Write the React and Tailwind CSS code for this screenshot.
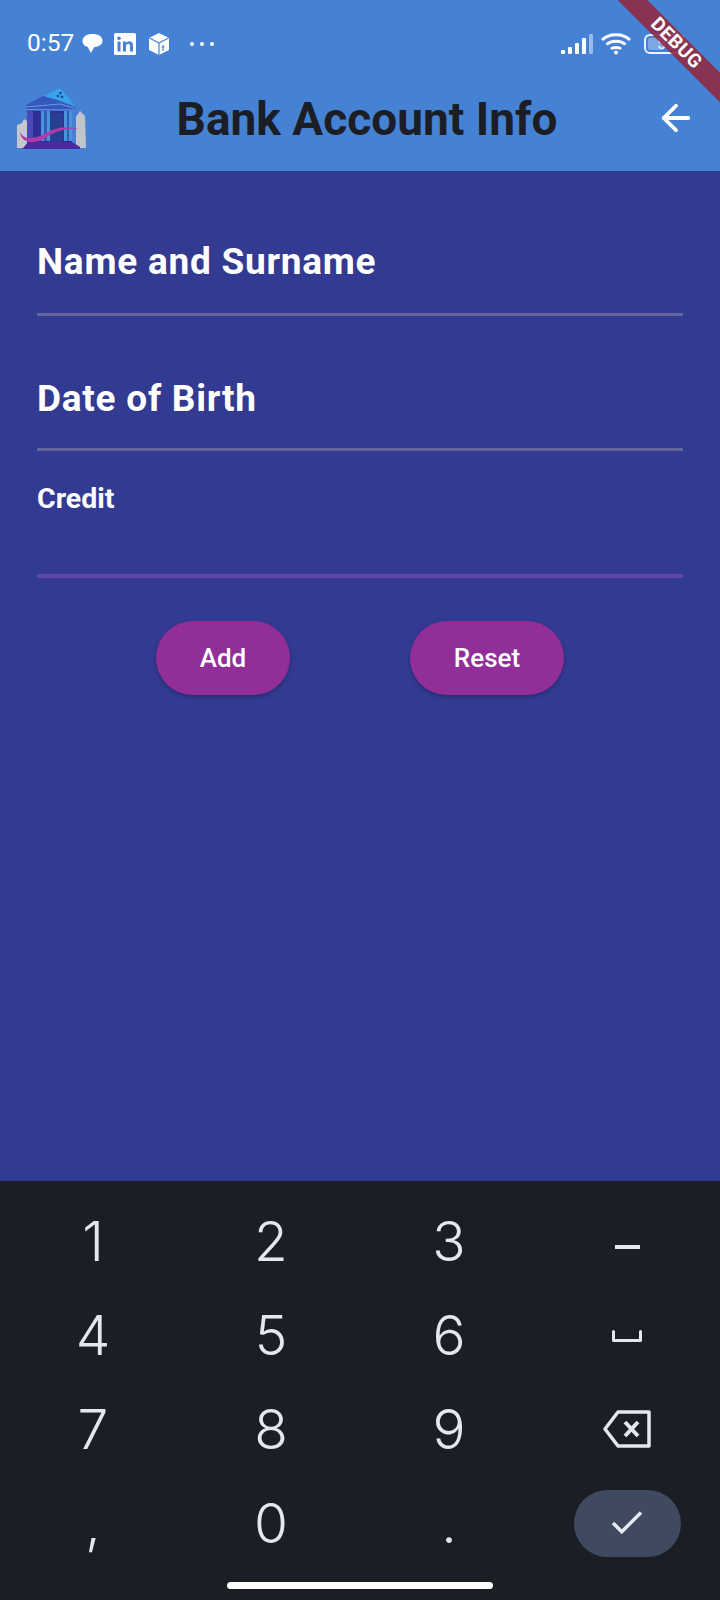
import { ArrowLeft, Check } from "lucide-react";

const keys = ["1", "2", "3", "dash", "4", "5", "6", "space", "7", "8", "9", "back", ",", "0", ".", "ok"];

const Logo = () => (
  <svg width="110" height="90" viewBox="0 0 110 90" className="shrink-0">
    <path d="M17 73 L17 50 L22 48 L24 44 L27 46 L28 73 Z" fill="#c6c8ce" />
    <path d="M76 73 L76 42 L80 36 L85 41 L86 73 Z" fill="#c2c4cc" />
    <path d="M43 21 L60 13 L75 31 L57 25 Z" fill="#35a4ea" />
    <circle cx="60.500" cy="18" r="1.300" fill="#1f3f8f" />
    <circle cx="58" cy="21" r="1.300" fill="#1f3f8f" />
    <circle cx="62" cy="22" r="1.300" fill="#1f3f8f" />
    <path d="M26 30 L43 21 L57 25 L75 32 L74 36 L26 36 Z" fill="#3557c0" />
    <path d="M26 32 L60 29 L74 33 M26 34.500 L74 35" stroke="#79aee6" strokeWidth="0.800" fill="none" />
    <path d="M27 36 L72 36 L72 69 L27 69 Z" fill="#2f2f98" />
    <path d="M27 36 L33 36 L33 69 L27 69 Z" fill="#4b49b8" />
    <path d="M41 36 L50 36 L50 66 L41 66 Z" fill="#4a94dc" />
    <path d="M44 36 L47 36 L47 66 L44 66 Z" fill="#2c5fb8" />
    <path d="M64 36 L72 36 L72 66 L64 66 Z" fill="#4a94dc" />
    <path d="M67 36 L69 36 L69 66 L67 66 Z" fill="#2c5fb8" />
    <path d="M50 38 L63 38 L63 66 L50 66 Z" fill="#27408f" />
    <path d="M24 72 L28 67 L72 67 L80 72 L80 74 L22 74 Z" fill="#4a2a9e" />
    <path d="M20 57 C24 66 36 64 46 58 C56 52 68 51 79 54 C66 53 56 56 47 62 C36 70 21 69 20 57 Z" fill="#b03aa8" />
  </svg>
);

const StatusBar = () => (
  <div className="flex h-[86px] shrink-0 items-center pl-[27px] pt-[1px] text-white">
    <span className="w-[55px] text-[24.500px] leading-none">0:57</span>
    <svg width="21" height="21" viewBox="0 0 20 20" fill="#fff">
      <path d="M10 1C4.500 1 0.500 3.500 0.500 7.500c0 3 2 5 5 5.800L8.500 19l3-5.500c4.500-.5 8-2.600 8-6 0-4-4-6.500-9.500-6.500Z" />
    </svg>
    <svg width="22" height="22" viewBox="0 0 22 22" className="ml-[11px]">
      <rect width="22" height="22" rx="1.500" fill="#fff" />
      <rect x="3.500" y="8.500" width="3" height="10" fill="#4682d4" />
      <circle cx="5" cy="5.200" r="1.800" fill="#4682d4" />
      <path d="M9 8.500h3v1.500c.7-1.100 1.800-1.800 3.300-1.800 2.600 0 3.700 1.700 3.700 4.300v6h-3v-5.400c0-1.400-.5-2.300-1.700-2.300-1.300 0-2.300.9-2.300 2.500v5.200H9Z" fill="#4682d4" />
    </svg>
    <svg width="20" height="22" viewBox="0 0 20 22" className="ml-[13px]">
      <path d="M10 0 L20 5 L20 17 L10 22 L0 17 L0 5 Z" fill="#fff" />
      <path d="M0.500 5 L10 10 L19.500 5 M10 10 L10 22" stroke="#4682d4" strokeWidth="1.200" fill="none" />
      <path d="M14 12 v6 M12.500 14 h3" stroke="#4682d4" strokeWidth="1.200" />
    </svg>
    <div className="ml-[21px] flex gap-[6px]">
      <span className="h-[4px] w-[4px] rounded-full bg-white" />
      <span className="h-[4px] w-[4px] rounded-full bg-white" />
      <span className="h-[4px] w-[4px] rounded-full bg-white" />
    </div>
    <div className="ml-auto flex items-center pr-[35px]">
      <svg width="33" height="22" viewBox="0 0 33 22" fill="#fff">
        <rect x="1" y="17" width="4" height="4" rx="1" />
        <rect x="8" y="14" width="4" height="7" rx="1" />
        <rect x="15" y="10" width="4" height="11" rx="1" />
        <rect x="22" y="5" width="4" height="16" rx="1" />
        <rect x="29" y="1" width="4" height="20" rx="1" opacity="0.45" />
      </svg>
      <svg width="32" height="24" viewBox="0 0 32 24" fill="none" stroke="#fff" strokeWidth="3" className="ml-[7px]">
        <path d="M2 8 C9 1 23 1 30 8" />
        <path d="M6.500 12.500 C11 8 21 8 25.500 12.500" />
        <path d="M11 17 C13 15 19 15 21 17" />
        <circle cx="16" cy="20.500" r="2" fill="#fff" stroke="none" />
      </svg>
      <div className="relative ml-[12px] flex h-[20px] w-[41px] items-center rounded-[6px] border-2 border-white/90">
        <div className="ml-[2px] h-[12px] w-[16px] rounded-[2px] bg-white/30" />
        <span className="absolute left-[11px] text-[16px] leading-none text-white/90">50</span>
      </div>
    </div>
  </div>
);

const Field = ({ label, className }) => (
  <div className={`border-b-[3px] border-[#62669b] ${className}`}>
    <div className="text-[37px] font-bold leading-[46px] tracking-[0.75px] text-white">{label}</div>
  </div>
);

const KeyContent = ({ k }) => {
  if (k === "dash") return <div className="mt-[10px] h-[4px] w-[25px] bg-[#e6e7ec]" />;
  if (k === "space")
    return (
      <svg width="30" height="12" viewBox="0 0 30 12" fill="none" stroke="#e6e7ec" strokeWidth="3" strokeLinejoin="round" strokeLinecap="round">
        <path d="M1.500 1.500v9h27v-9" />
      </svg>
    );
  if (k === "back")
    return (
      <svg width="48" height="38" viewBox="0 0 48 38" fill="none" stroke="#e6e7ec" strokeWidth="3.500" strokeLinejoin="round" strokeLinecap="round">
        <path d="M15 2 H46 V36 H15 L2 19 Z" />
        <path d="M22 12 L35 26 M35 12 L22 26" strokeWidth="4" strokeLinecap="butt" />
      </svg>
    );
  if (k === "ok")
    return (
      <div className="flex h-[67px] w-[107px] items-center justify-center rounded-full bg-[#3f495f]">
        <Check size={42} strokeWidth={2} color="#e6e9f2" strokeLinecap="butt" strokeLinejoin="miter" />
      </div>
    );
  return <span className="font-['Inter'] text-[55px] font-[350] leading-none text-[#e6e7ec]">{k}</span>;
};

export default function App() {
  return (
    <div className="relative flex h-screen w-full flex-col overflow-hidden bg-[#333a92] font-['Roboto',sans-serif]">
      <header className="h-[171px] shrink-0 bg-[#4682d4]">
        <StatusBar />
        <div className="flex h-[85px] items-start">
          <div className="-mt-[11px]">
            <Logo />
          </div>
          <h1 className="flex-1 pt-[4px] text-center text-[46px] font-bold leading-[58px] text-[#1c1e25]">
            Bank Account Info
          </h1>
          <div className="flex w-[96px] justify-end pr-[23px] pt-[11px]">
            <ArrowLeft size={42} color="#fff" strokeWidth={2.200} />
          </div>
        </div>
      </header>

      <main className="flex-1 px-[37px]">
        <Field label="Name and Surname" className="pb-[28px] pt-[68px]" />
        <Field label="Date of Birth" className="pb-[26px] pt-[60px]" />
        <div className="border-b-[4px] border-[#5f47a6] pb-[60px] pt-[33px]">
          <div className="text-[28.500px] font-bold leading-[30px] text-white">Credit</div>
        </div>
        <div className="mt-[43px] flex justify-center gap-[120px]">
          <button className="h-[74px] w-[134px] rounded-[37px] bg-[#922e98] text-[26px] font-medium text-white shadow-[0_2px_4px_rgba(0,0,0,0.25)]">
            Add
          </button>
          <button className="h-[74px] w-[154px] rounded-[37px] bg-[#922e98] text-[26px] font-medium text-white shadow-[0_2px_4px_rgba(0,0,0,0.25)]">
            Reset
          </button>
        </div>
      </main>

      <section className="h-[419px] shrink-0 bg-[#1c1e25] pt-[14px]">
        <div className="grid h-[375px] grid-cols-4 grid-rows-4 px-[4px]">
          {keys.map((k) => (
            <div key={k} className="flex items-center justify-center">
              <KeyContent k={k} />
            </div>
          ))}
        </div>
        <div className="mx-auto mt-[12px] h-[7px] w-[266px] rounded-full bg-white" />
      </section>

      {/* debug ribbon over the corner */}
      <div className="absolute left-[576px] top-[33px] flex h-[21px] w-[200px] rotate-45 items-center justify-center bg-[#8e2a42]/90 text-[19px] font-bold tracking-[0.5px] text-white">
        DEBUG
      </div>
    </div>
  );
}
